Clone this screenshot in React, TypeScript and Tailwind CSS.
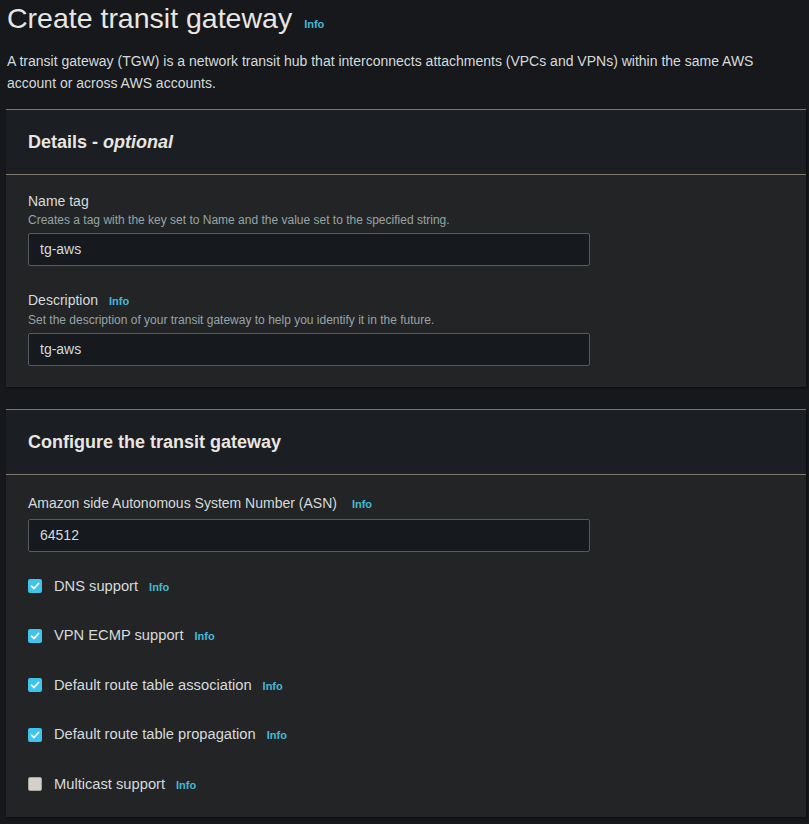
import React from 'react';

const font = { fontFamily: '"Liberation Sans", Arial, sans-serif' };

function Info({ className = '' }: { className?: string }) {
  return <span className={`text-[11px] font-bold text-[#44b9d6] ${className}`}>Info</span>;
}

function Check({ checked }: { checked: boolean }) {
  if (!checked) {
    return <span className="w-[14px] h-[14px] rounded-[2px] bg-[#d5d0ca] border border-[#a9a49e] shrink-0" />;
  }
  return (
    <span className="w-[14px] h-[14px] rounded-[2px] bg-[#3fc4ee] flex items-center justify-center shrink-0">
      <svg width="10" height="10" viewBox="0 0 10 10" fill="none">
        <path d="M1.5 5.2 L4 7.5 L8.5 2.5" stroke="white" strokeWidth="1.8" strokeLinecap="round" strokeLinejoin="round" />
      </svg>
    </span>
  );
}

function Field({ label, hint, value, info, infoGap = 'gap-[11px]' }: { label: string; hint?: string; value: string; info?: boolean; infoGap?: string }) {
  return (
    <div>
      <div className={`flex items-baseline ${infoGap} text-[14px] text-[#d5dbdb] leading-[20px]`}>
        {label}
        {info && <Info />}
      </div>
      {hint && <div className="text-[12px] text-[#95a5a6] leading-[16px] mt-[1px]">{hint}</div>}
      <div className="mt-[5px] w-[562px] h-[33px] bg-[#16191e] border border-[#565b61] rounded-[2px] px-[11px] flex items-center text-[14px] text-[#d5dbdb]">
        {value}
      </div>
    </div>
  );
}

export default function App() {
  const opts = [
    { label: 'DNS support', on: true },
    { label: 'VPN ECMP support', on: true },
    { label: 'Default route table association', on: true },
    { label: 'Default route table propagation', on: true },
    { label: 'Multicast support', on: false },
  ];

  return (
    <div className="w-[809px] h-[824px] overflow-hidden bg-[#16181c] text-[#d5dbdb]" style={font}>
      <div className="px-[7px]">
        <h1 className="flex items-baseline gap-[12px] pt-[1px] text-[28.5px] leading-[34px] text-[#e9e6e1]">
          Create transit gateway <Info />
        </h1>
        <p className="mt-[9px] text-[14px] leading-[22px] text-[#d5dbdb]">
          A transit gateway (TGW) is a network transit hub that interconnects attachments (VPCs and VPNs) within the same AWS account or across AWS accounts.
        </p>
      </div>

      {/* Details */}
      <section className="mt-[15px] ml-[6px] w-[800px] border-t border-[#7e776e] bg-[#232426] shadow-[1px_1px_2px_rgba(0,0,0,0.6)]">
        <div className="h-[65px] bg-[#1b1e22] border-b border-[#7e776e] px-[22px] flex items-center">
          <h2 className="text-[18px] font-bold text-[#e9e6e1]">
            Details - <i>optional</i>
          </h2>
        </div>
        <div className="px-[22px] pt-[16px] pb-[21px] flex flex-col gap-[24px]">
          <Field label="Name tag" hint="Creates a tag with the key set to Name and the value set to the specified string." value="tg-aws" />
          <Field label="Description" info hint="Set the description of your transit gateway to help you identify it in the future." value="tg-aws" />
        </div>
      </section>

      {/* Configure */}
      <section className="mt-[22px] ml-[6px] w-[800px] border-t border-[#7e776e] bg-[#232426] shadow-[1px_1px_2px_rgba(0,0,0,0.6)]">
        <div className="h-[65px] bg-[#1b1e22] border-b border-[#7e776e] px-[22px] flex items-center">
          <h2 className="text-[18px] font-bold text-[#e9e6e1]">Configure the transit gateway</h2>
        </div>
        <div className="px-[22px] pt-[18px] pb-[23px]">
          <Field label="Amazon side Autonomous System Number (ASN)" info infoGap="gap-[15px]" value="64512" />
          <div className="mt-[24px] flex flex-col gap-[29.5px]">
            {opts.map((o) => (
              <div key={o.label} className="flex items-center h-[20px] text-[14.7px] text-[#d5dbdb]">
                <Check checked={o.on} />
                <span className="ml-[12px]">{o.label}</span>
                <Info className="ml-[11px] mt-[2px]" />
              </div>
            ))}
          </div>
        </div>
      </section>
    </div>
  );
}
